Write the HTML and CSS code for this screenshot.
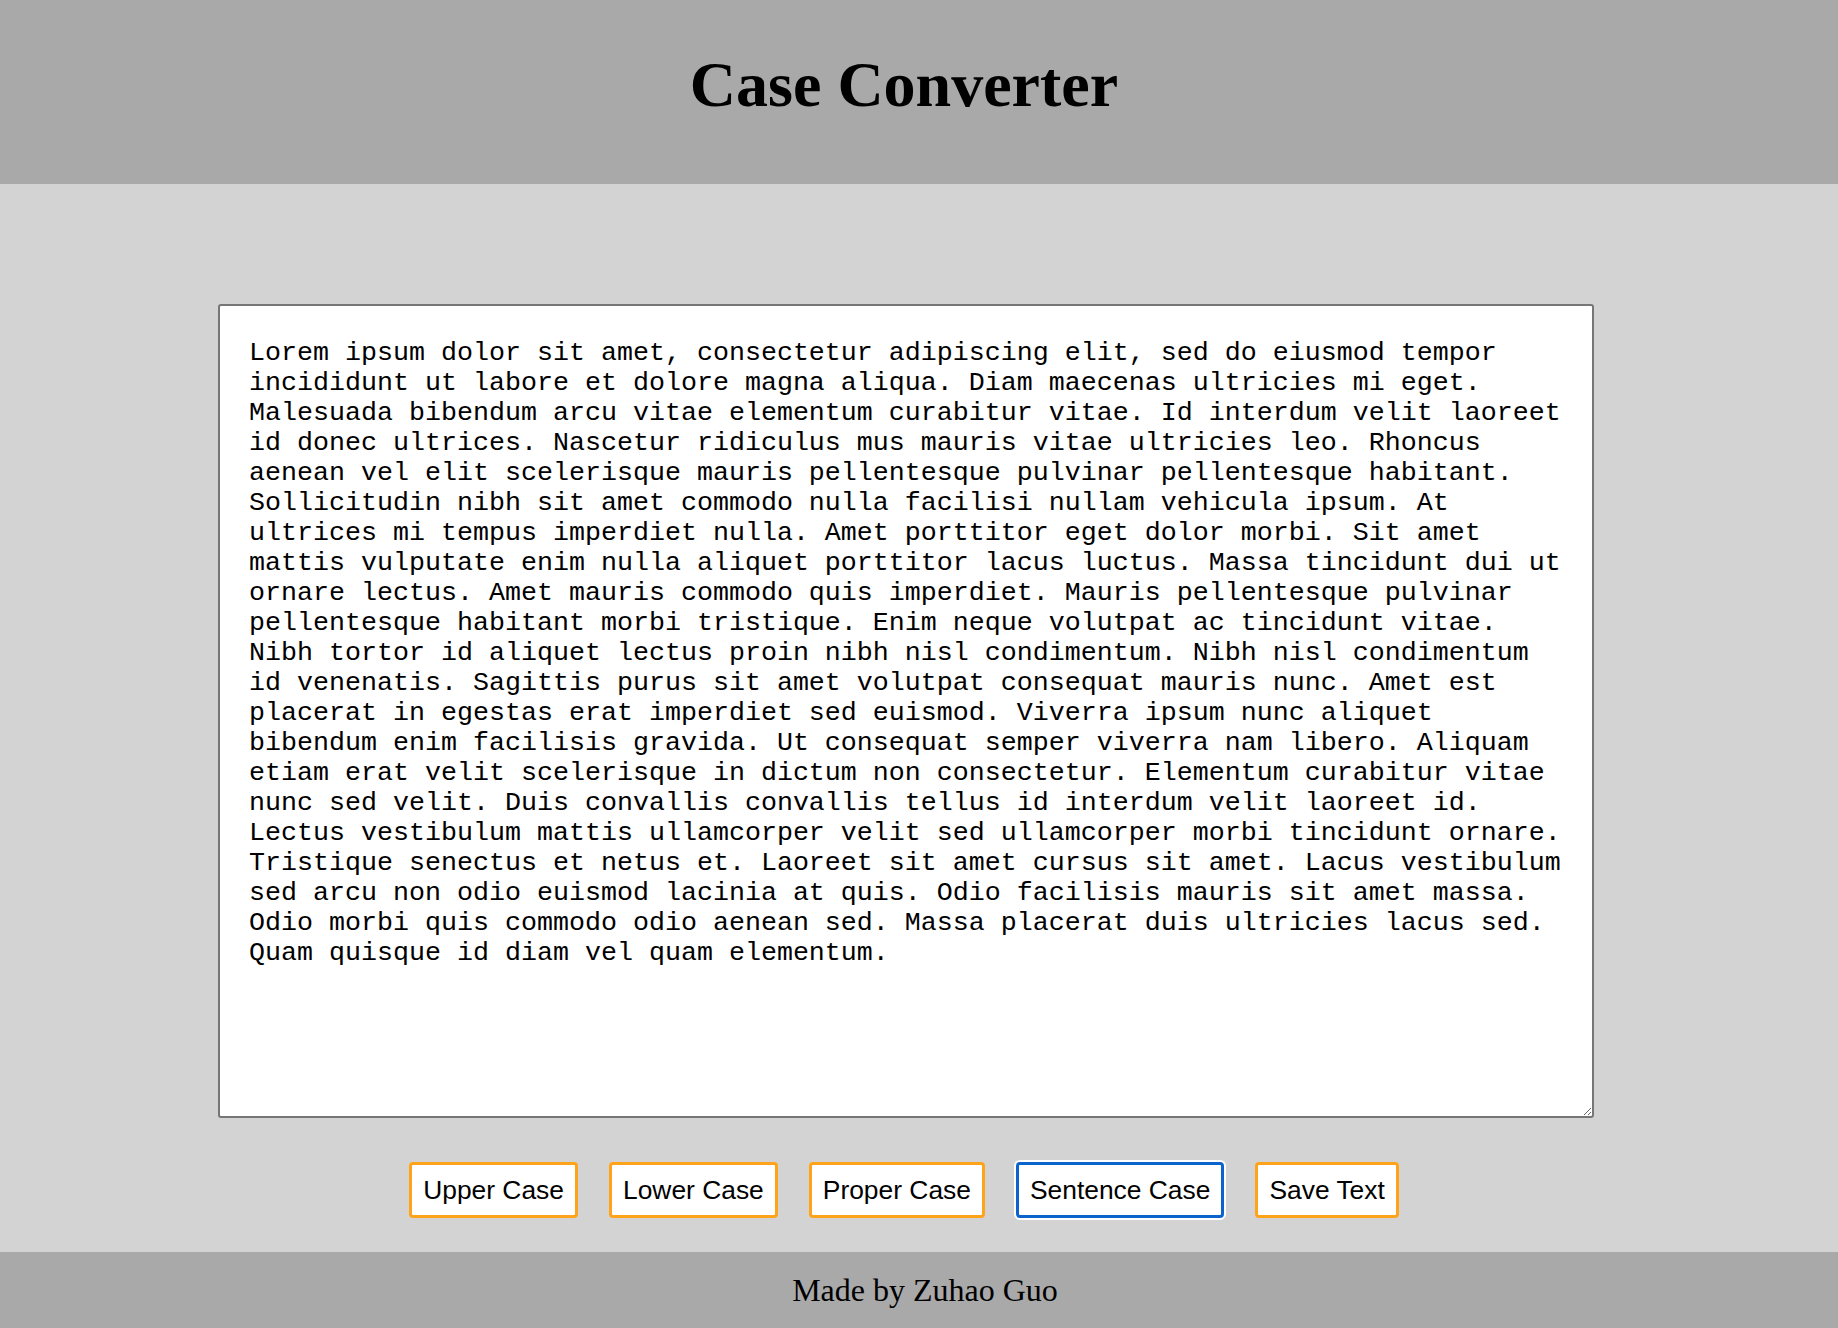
FILE: index.html
```html
<!DOCTYPE html>
<html lang="en">
<head>
<meta charset="utf-8">
<title>Case Converter</title>
<link rel="stylesheet" href="styles.css">
</head>
<body>
<header class="site-header">
  <h1 class="site-title">Case Converter</h1>
</header>
<main class="site-main">
  <div class="editor-wrap">
    <textarea class="editor" spellcheck="false">Lorem ipsum dolor sit amet, consectetur adipiscing elit, sed do eiusmod tempor incididunt ut labore et dolore magna aliqua. Diam maecenas ultricies mi eget. Malesuada bibendum arcu vitae elementum curabitur vitae. Id interdum velit laoreet id donec ultrices. Nascetur ridiculus mus mauris vitae ultricies leo. Rhoncus aenean vel elit scelerisque mauris pellentesque pulvinar pellentesque habitant. Sollicitudin nibh sit amet commodo nulla facilisi nullam vehicula ipsum. At ultrices mi tempus imperdiet nulla. Amet porttitor eget dolor morbi. Sit amet mattis vulputate enim nulla aliquet porttitor lacus luctus. Massa tincidunt dui ut ornare lectus. Amet mauris commodo quis imperdiet. Mauris pellentesque pulvinar pellentesque habitant morbi tristique. Enim neque volutpat ac tincidunt vitae. Nibh tortor id aliquet lectus proin nibh nisl condimentum. Nibh nisl condimentum id venenatis. Sagittis purus sit amet volutpat consequat mauris nunc. Amet est placerat in egestas erat imperdiet sed euismod. Viverra ipsum nunc aliquet bibendum enim facilisis gravida. Ut consequat semper viverra nam libero. Aliquam etiam erat velit scelerisque in dictum non consectetur. Elementum curabitur vitae nunc sed velit. Duis convallis convallis tellus id interdum velit laoreet id. Lectus vestibulum mattis ullamcorper velit sed ullamcorper morbi tincidunt ornare. Tristique senectus et netus et. Laoreet sit amet cursus sit amet. Lacus vestibulum sed arcu non odio euismod lacinia at quis. Odio facilisis mauris sit amet massa. Odio morbi quis commodo odio aenean sed. Massa placerat duis ultricies lacus sed. Quam quisque id diam vel quam elementum.</textarea>
  </div>
  <div class="actions">
    <button class="btn" type="button">Upper Case</button>
    <button class="btn" type="button">Lower Case</button>
    <button class="btn" type="button">Proper Case</button>
    <button class="btn btn-focused" type="button">Sentence Case</button>
    <button class="btn" type="button">Save Text</button>
  </div>
</main>
<footer class="site-footer">Made by Zuhao Guo</footer>
</body>
</html>
```
FILE: styles.css
```css
html, body {
  margin: 0;
  padding: 0;
}

body {
  background: #d3d3d3;
  font-family: "Liberation Serif", "Times New Roman", serif;
  color: #000;
}

.site-header {
  background: #a9a9a9;
  height: 184px;
  box-sizing: border-box;
  padding: 48px 30px 0 0;
}

.site-title {
  margin: 0;
  font-size: 64px;
  font-weight: bold;
  line-height: normal;
  text-align: center;
}

.site-main {
  background: #d3d3d3;
  height: 1068px;
  box-sizing: border-box;
  padding-top: 120px;
}

.editor-wrap {
  display: flex;
  justify-content: center;
  padding-right: 26px;
}

.editor {
  display: block;
  box-sizing: border-box;
  width: 1376px;
  height: 814px;
  margin: 0;
  padding: 32px 27px 30px 29px;
  border: 2px solid #767676;
  border-radius: 3px;
  background: #fff;
  color: #000;
  font-family: "Liberation Mono", "Courier New", monospace;
  font-size: 26.6667px;
  line-height: normal;
  resize: both;
  outline: none;
}

.actions {
  display: flex;
  justify-content: center;
  gap: 31px;
  margin-top: 44px;
  padding-right: 30px;
}

.btn {
  box-sizing: border-box;
  height: 56px;
  margin: 0;
  padding: 0 11px;
  background: #fff;
  color: #000;
  border: 3px solid #ffa31a;
  border-radius: 4px;
  font-family: "Liberation Sans", Arial, Helvetica, sans-serif;
  font-size: 26.4px;
  line-height: normal;
  cursor: pointer;
}

.btn-focused {
  border-color: #0b63cc;
  box-shadow: 0 0 0 2px #fff;
}

.site-footer {
  background: #a9a9a9;
  height: 76px;
  line-height: 76px;
  font-size: 32px;
  text-align: center;
  padding-left: 12px;
}
```
